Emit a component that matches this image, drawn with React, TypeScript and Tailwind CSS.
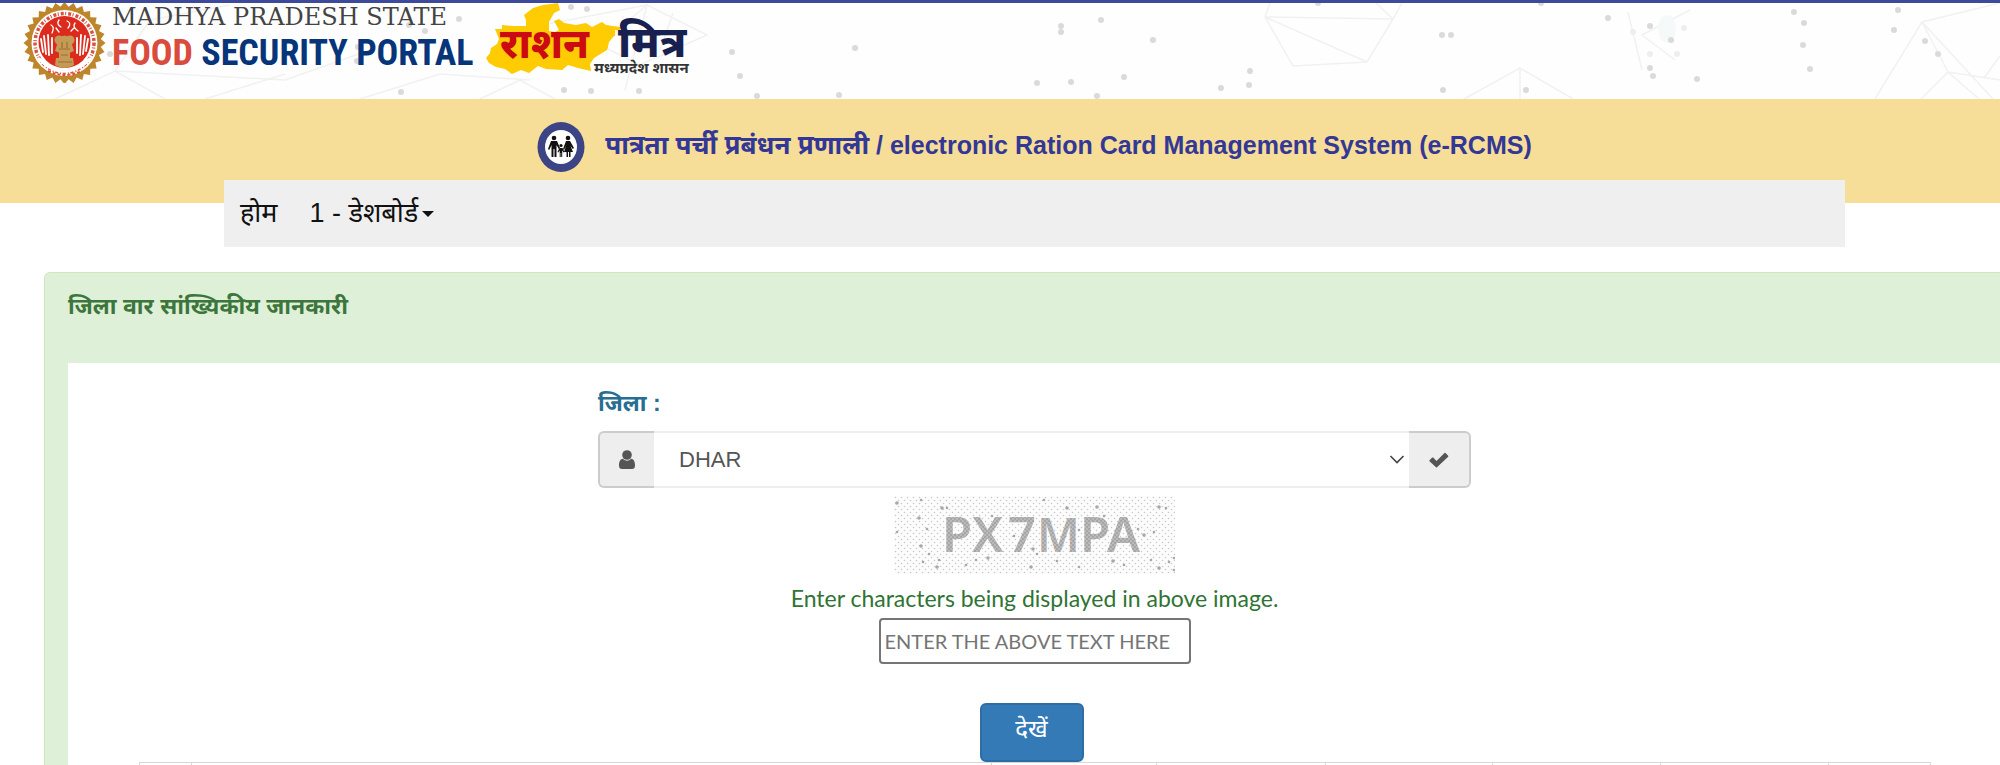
const DOTS: [number, number][] = [
  [110, 54], [358, 47], [357, 61], [409, 25], [425, 31], [459, 19], [401, 92], [564, 90], [591, 91], [639, 91],
  [571, 7], [587, 9], [732, 52], [740, 76], [757, 96], [855, 48], [839, 95], [1061, 26], [1061, 32], [1101, 20],
  [1153, 40], [1037, 83], [1071, 82], [1124, 77], [1097, 96], [1250, 71], [1249, 85], [1221, 88], [1442, 35],
  [1451, 35], [1318, 3], [1541, 3], [1608, 18], [1443, 90], [1526, 90], [1650, 26], [1671, 40], [1650, 68],
  [1653, 76], [1697, 79], [1794, 12], [1804, 23], [1803, 45], [1810, 69], [1898, 10], [1894, 30], [1925, 41],
  [1938, 54],
];

const FAINT_DOTS: [number, number][] = [[1633, 32], [1684, 28], [1650, 54], [1677, 54]];

const CAPTCHA_LETTERS: [string, number][] = [['P', 48], ['X', 78], ['7', 114], ['M', 143], ['P', 186], ['A', 213]];

const SPECKS: [number, number][] = [
  [3, 7], [27, 4], [53, 12], [25, 22], [33, 33], [3, 36], [27, 50], [45, 64], [29, 66], [43, 71], [72, 69],
  [82, 64], [94, 62], [98, 20], [120, 40], [139, 53], [143, 58], [150, 4], [173, 12], [163, 65], [185, 34],
  [203, 11], [210, 20], [185, 71], [219, 65], [230, 69], [244, 33], [250, 39], [260, 36], [272, 12], [265, 11],
  [257, 64], [275, 66], [265, 72], [280, 62], [280, 74], [137, 71], [195, 52], [35, 58], [48, 12], [66, 22],
];

const COLUMNS = ['w-[52px]', 'w-[800px]', 'w-[165px]', 'w-[169px]', 'w-[167px]', 'w-[168px]', 'w-[168px]', 'w-[102px]'];

function gearPoints(cx: number, cy: number, outer: number, inner: number, teeth: number) {
  const points: string[] = [];
  for (let i = 0; i < teeth * 2; i++) {
    const r = i % 2 === 0 ? outer : inner;
    const a = (Math.PI * i) / teeth;
    points.push(`${(cx + r * Math.cos(a)).toFixed(1)},${(cy + r * Math.sin(a)).toFixed(1)}`);
  }
  return points.join(' ');
}

function HeaderPattern() {
  return (
    <svg className="absolute inset-0 h-full w-[2000px]" viewBox="0 0 2000 96" aria-hidden="true">
      <g transform="translate(0 -3)">
        <g fill="none" stroke="#f1f1f1" strokeWidth="1.5">
          <path d="M1270 3L1265 17L1293 66L1367 62L1393 19L1402 3M1265 17L1393 19M1265 17L1367 62M1376 3L1393 19" />
          <path d="M1464 99L1520 68L1573 99M1520 68V99" />
          <path d="M1875 99L1922 22L2000 3M1922 22L1993 99M1922 22L1948 72L1921 99M1948 72L2000 80M1948 72L1979 99M2000 56L1984 78" />
          <path d="M532 27L647 5L707 35L640 65L600 45L647 5L625 90M673 13L660 50M480 99L520 80L555 99M55 99L115 71L165 99M115 71L150 20L230 5M115 71L285 80L370 50M205 99L285 74M360 99L440 74L530 80" />
          <path d="M1628 12L1642 70M1642 35L1690 10M1642 35L1675 60" />
        </g>
        <ellipse cx="1667" cy="29" rx="9" ry="14" fill="#f6f9fa" />
        <g fill="#dadada">
          {DOTS.map(([x, y], i) => (
            <circle key={i} cx={x} cy={y} r="3" />
          ))}
        </g>
        <g fill="#eeeeee">
          {FAINT_DOTS.map(([x, y], i) => (
            <circle key={i} cx={x} cy={y} r="3" />
          ))}
        </g>
      </g>
    </svg>
  );
}

function StateEmblem() {
  return (
    <svg className="h-20 w-[83px]" viewBox="0 0 83 80" role="img" aria-label="Government of Madhya Pradesh">
      <polygon points={gearPoints(41.5, 40, 41, 36.5, 28)} fill="#bd862b" />
      <circle cx="41.5" cy="40" r="33" fill="#fff" />
      <circle cx="41.5" cy="40" r="29.5" fill="none" stroke="#d8523f" strokeWidth="3.5" strokeDasharray="3 1.5 1 2" />
      <circle cx="41.5" cy="39" r="26" fill="#dc2a1c" />
      <g stroke="#fff" strokeWidth="1.8" fill="none" strokeLinecap="round">
        <path d="M18 36l2 13M21 33l2 18M25 32l1 20M29 35v15M54 35v15M58 32l-1 20M62 33l-2 18M65 36l-2 12" />
        <path d="M28 22q4 2 1 8M36 17q-3 4 2 7M44 18q5 2 1 7M52 20q-3 4 3 8M33 25l3 4M48 28l3-3" strokeWidth="1.3" />
        <path d="M16 56q25 24 51 0" strokeWidth="3.5" />
      </g>
      <g fill="#c49a55">
        <circle cx="36" cy="37" r="4.5" />
        <circle cx="47" cy="37" r="4.5" />
        <path d="M36 35q5.500-5 11 0l4 13q-9.500 5-19 0z" />
        <path d="M33 55h17l1 7q-9.500 6-19 0z" />
        <path d="M36 49h11v7H36z" />
      </g>
      <path d="M36 46h11M35 59h14M39 39v6M44 39v6M38 52h7" stroke="#9b6f35" strokeWidth="1.2" />
      <path d="M25 68q16 8 34 0" stroke="#d8523f" strokeWidth="2" strokeDasharray="3 2" fill="none" />
    </svg>
  );
}

function RationMitraLogo() {
  return (
    <svg className="h-[76px] w-[216px]" viewBox="0 0 216 76" role="img" aria-label="राशन मित्र">
      <path
        d="M38 12L47 5L57 2L72 0L74 7L68 10L63 19V28L69 29L73 27L68 18L73 16L78 20L90 22L100 20L106 24L116 19L120 22L134 24V27H129V33H128L123 39L122 44L121 47L108 55L104 61L105 68L92 65L82 62L76 67L60 66L52 63L43 70L35 67L26 71L19 66L10 64L3 60L0 55L4 50L5 45L11 41L13 36L9 26H16V22L27 23H40V17Z"
        fill="#ffcb03"
      />
      <g fontFamily="'Noto Sans', sans-serif" fontWeight="800">
        <text x="14" y="55" fontSize="41" fill="#cc0a12">राशन</text>
        <text x="132" y="54" fontSize="43" fill="#17204f">मित्र</text>
        <text x="108" y="70" fontSize="15" fontWeight="700" fill="#333333">मध्यप्रदेश शासन</text>
      </g>
    </svg>
  );
}

function FamilyIcon() {
  return (
    <svg className="h-[50px] w-12 shrink-0" viewBox="0 0 48 50" aria-hidden="true">
      <ellipse cx="24" cy="25" rx="23.5" ry="25" fill="#3c4485" />
      <ellipse cx="24" cy="25" rx="16" ry="17" fill="#fff" />
      <g fill="#111">
        <circle cx="17" cy="16" r="2.3" />
        <path d="M14 19h6l3 7-1.200 1-2.300-4v12h-2v-8h-1v8h-2V23l-2.300 5-1.200-1z" />
        <circle cx="31" cy="16" r="2.3" />
        <path d="M29 19h4l4 7-1.200 1-2.300-3 2.500 6h-2.500v5h-1.500v-5h-1v5h-1.500v-5H27l2-6-2 4-1-1z" />
        <circle cx="24" cy="23.500" r="1.600" />
        <path d="M22.500 26h3l2 4-.8.5-1.500-2V35h-1v-4h-.5v4h-1v-6.500l-1.400 2-.8-.5z" />
      </g>
    </svg>
  );
}

function UserIcon() {
  return (
    <svg className="h-5 w-4" viewBox="0 0 16 20" fill="currentColor" aria-hidden="true">
      <circle cx="8" cy="5" r="4.800" />
      <path d="M3.800 8.800Q8 12.500 12.200 8.800C15 9.200 16 12 16 15.500Q16 19 13 19H3Q0 19 0 15.500C0 12 1 9.200 3.800 8.800z" />
    </svg>
  );
}

function CheckIcon() {
  return (
    <svg className="h-4 w-5" viewBox="0 0 20 16" fill="currentColor" aria-hidden="true">
      <path d="M.5 8.300L3.200 5.600Q3.700 5.200 4.200 5.600L7.500 9L15.500 1Q16 .6 16.500 1L19.200 3.700Q19.600 4.200 19.200 4.700L8 15.300Q7.500 15.700 7 15.300L.5 9.200Q.1 8.700 .5 8.300z" />
    </svg>
  );
}

function CaptchaImage() {
  return (
    <svg className="h-[78px] w-[281px]" viewBox="0 0 281 78" role="img" aria-label="Captcha">
      <defs>
        <pattern id="grain" width="6" height="6" patternUnits="userSpaceOnUse">
          <circle cx="1.500" cy="1.500" r="0.800" fill="#c9c9c9" />
          <circle cx="4.500" cy="4.500" r="0.800" fill="#c9c9c9" />
        </pattern>
        <pattern id="weave" width="4" height="4" patternUnits="userSpaceOnUse">
          <path d="M0 0h4v4H0z" fill="#a6a6a6" />
          <circle cx="1" cy="1" r="0.700" fill="#dddddd" />
          <circle cx="3" cy="3" r="0.700" fill="#dddddd" />
        </pattern>
      </defs>
      <path d="M0 0h281v78H0z" fill="#fcfcfc" />
      <path d="M0 0h281v78H0z" fill="url(#grain)" />
      {SPECKS.map(([x, y], i) => (
        <circle key={i} cx={x} cy={y} r={i % 3 === 0 ? 1.8 : 1.3} fill="#a8a8a8" />
      ))}
      <g fontFamily="'Noto Sans', sans-serif" fontWeight="600" fill="url(#weave)">
        {CAPTCHA_LETTERS.map(([letter, x]) => (
          <text key={x} x={x} y="56" fontSize={letter === 'M' ? 46 : 49}>{letter}</text>
        ))}
      </g>
    </svg>
  );
}

export default function App() {
  return (
    <div className="overflow-hidden bg-white font-['Liberation_Sans','Noto_Sans',sans-serif]">
      {/* the page body runs a little wider than the window */}
      <div className="-mr-[69px]">
        <header className="relative h-[99px] border-t-[3px] border-[#3d4a9a] bg-[#fefefe]">
          <HeaderPattern />
          <div className="relative flex items-start pl-[23px]">
            <StateEmblem />
            <div className="ml-[6px] w-[374px] whitespace-nowrap">
              <p className="pt-[2px] font-['DejaVu_Serif',serif] text-[24px] leading-[24px] text-[#444444]">
                MADHYA PRADESH STATE
              </p>
              <p className="font-['Roboto_Condensed','Open_Sans_Condensed',sans-serif] text-[36px] leading-[48px] font-bold text-[#06357a]">
                <span className="text-[#d84b3d]">FOOD</span> SECURITY PORTAL
              </p>
            </div>
            <RationMitraLogo />
          </div>
        </header>

        <div className="h-[104px] bg-[#f6dd98] pt-[23px]">
          <div className="flex items-start justify-center gap-5">
            <FamilyIcon />
            <h1 className="text-[25px] leading-[46px] font-bold whitespace-nowrap text-[#333796]">
              <span className="text-[26px]">पात्रता पर्ची प्रबंधन प्रणाली</span> / electronic Ration Card Management System (e-RCMS)
            </h1>
          </div>
        </div>

        <nav className="relative mx-[224px] -mt-[23px] flex h-[67px] items-center gap-8 bg-[#efefef] px-4 text-[27px] text-[#111111]">
          <a href="#home">होम</a>
          <a href="#dashboard" className="flex items-center gap-1">
            1 - डेशबोर्ड
            <span className="border-x-[6px] border-t-[6px] border-x-transparent border-t-[#111111]" />
          </a>
        </nav>

        <main className="mx-11 mt-[25px] rounded-[6px] border border-[#d0e6bd] bg-[#dff0d8] px-[23px]">
          <h2 className="h-[90px] pt-4 text-[23px] leading-[34px] font-bold text-[#3c763d]">जिला वार सांख्यिकीय जानकारी</h2>

          <section className="bg-white pt-6">
            <form className="mx-auto flex w-[873px] flex-col items-center" onSubmit={(e) => e.preventDefault()}>
              <label htmlFor="district" className="self-start text-[23px] leading-[32px] font-bold text-[#286d92]">
                जिला :
              </label>
              <div className="mt-3 flex h-[57px] w-full text-[#555555]">
                <span className="flex w-[56px] items-center justify-center rounded-l-[6px] border-2 border-r-0 border-[#cccccc] bg-[#eeeeee]">
                  <UserIcon />
                </span>
                <div className="relative flex-1">
                  <select
                    id="district"
                    defaultValue="DHAR"
                    className="h-full w-full appearance-none border-2 border-x-0 border-[#eeeeee] bg-white pl-[25px] text-[22px] text-[#555555]"
                  >
                    <option>DHAR</option>
                  </select>
                  <svg className="pointer-events-none absolute top-[23px] right-1 h-3 w-4" viewBox="0 0 16 12" fill="none" stroke="#444444" strokeWidth="1.6">
                    <path d="M1.500 2L8 8.500L14.500 2" />
                  </svg>
                </div>
                <span className="flex w-[62px] items-center justify-center rounded-r-[6px] border-2 border-l-0 border-[#cccccc] bg-[#eeeeee]">
                  <CheckIcon />
                </span>
              </div>

              <div className="mt-2">
                <CaptchaImage />
              </div>
              <label htmlFor="captcha" className="mt-2 mb-1 font-['Lato',sans-serif] text-[23px] leading-[32px] text-[#2f7433]">
                Enter characters being displayed in above image.
              </label>
              <input
                id="captcha"
                type="text"
                placeholder="ENTER THE ABOVE TEXT HERE"
                className="h-[46px] w-[312px] rounded-[4px] border-2 border-[#767676] bg-white px-1 font-['Lato',sans-serif] text-[20px] placeholder:text-[#757575]"
              />
              <button
                type="submit"
                className="mt-[39px] mr-1.5 h-[59px] w-[104px] rounded-[6px] border-2 border-[#2e6da4] bg-[#337ab7] pb-2 text-[24px] text-white"
              >
                देखें
              </button>
            </form>

            <table className="mx-auto w-[1792px] table-fixed border-collapse">
              <tbody>
                <tr className="h-10">
                  {COLUMNS.map((width, i) => (
                    <td key={i} className={`border border-[#d8d8d8] ${width}`} />
                  ))}
                </tr>
              </tbody>
            </table>
          </section>
        </main>
      </div>
    </div>
  );
}
